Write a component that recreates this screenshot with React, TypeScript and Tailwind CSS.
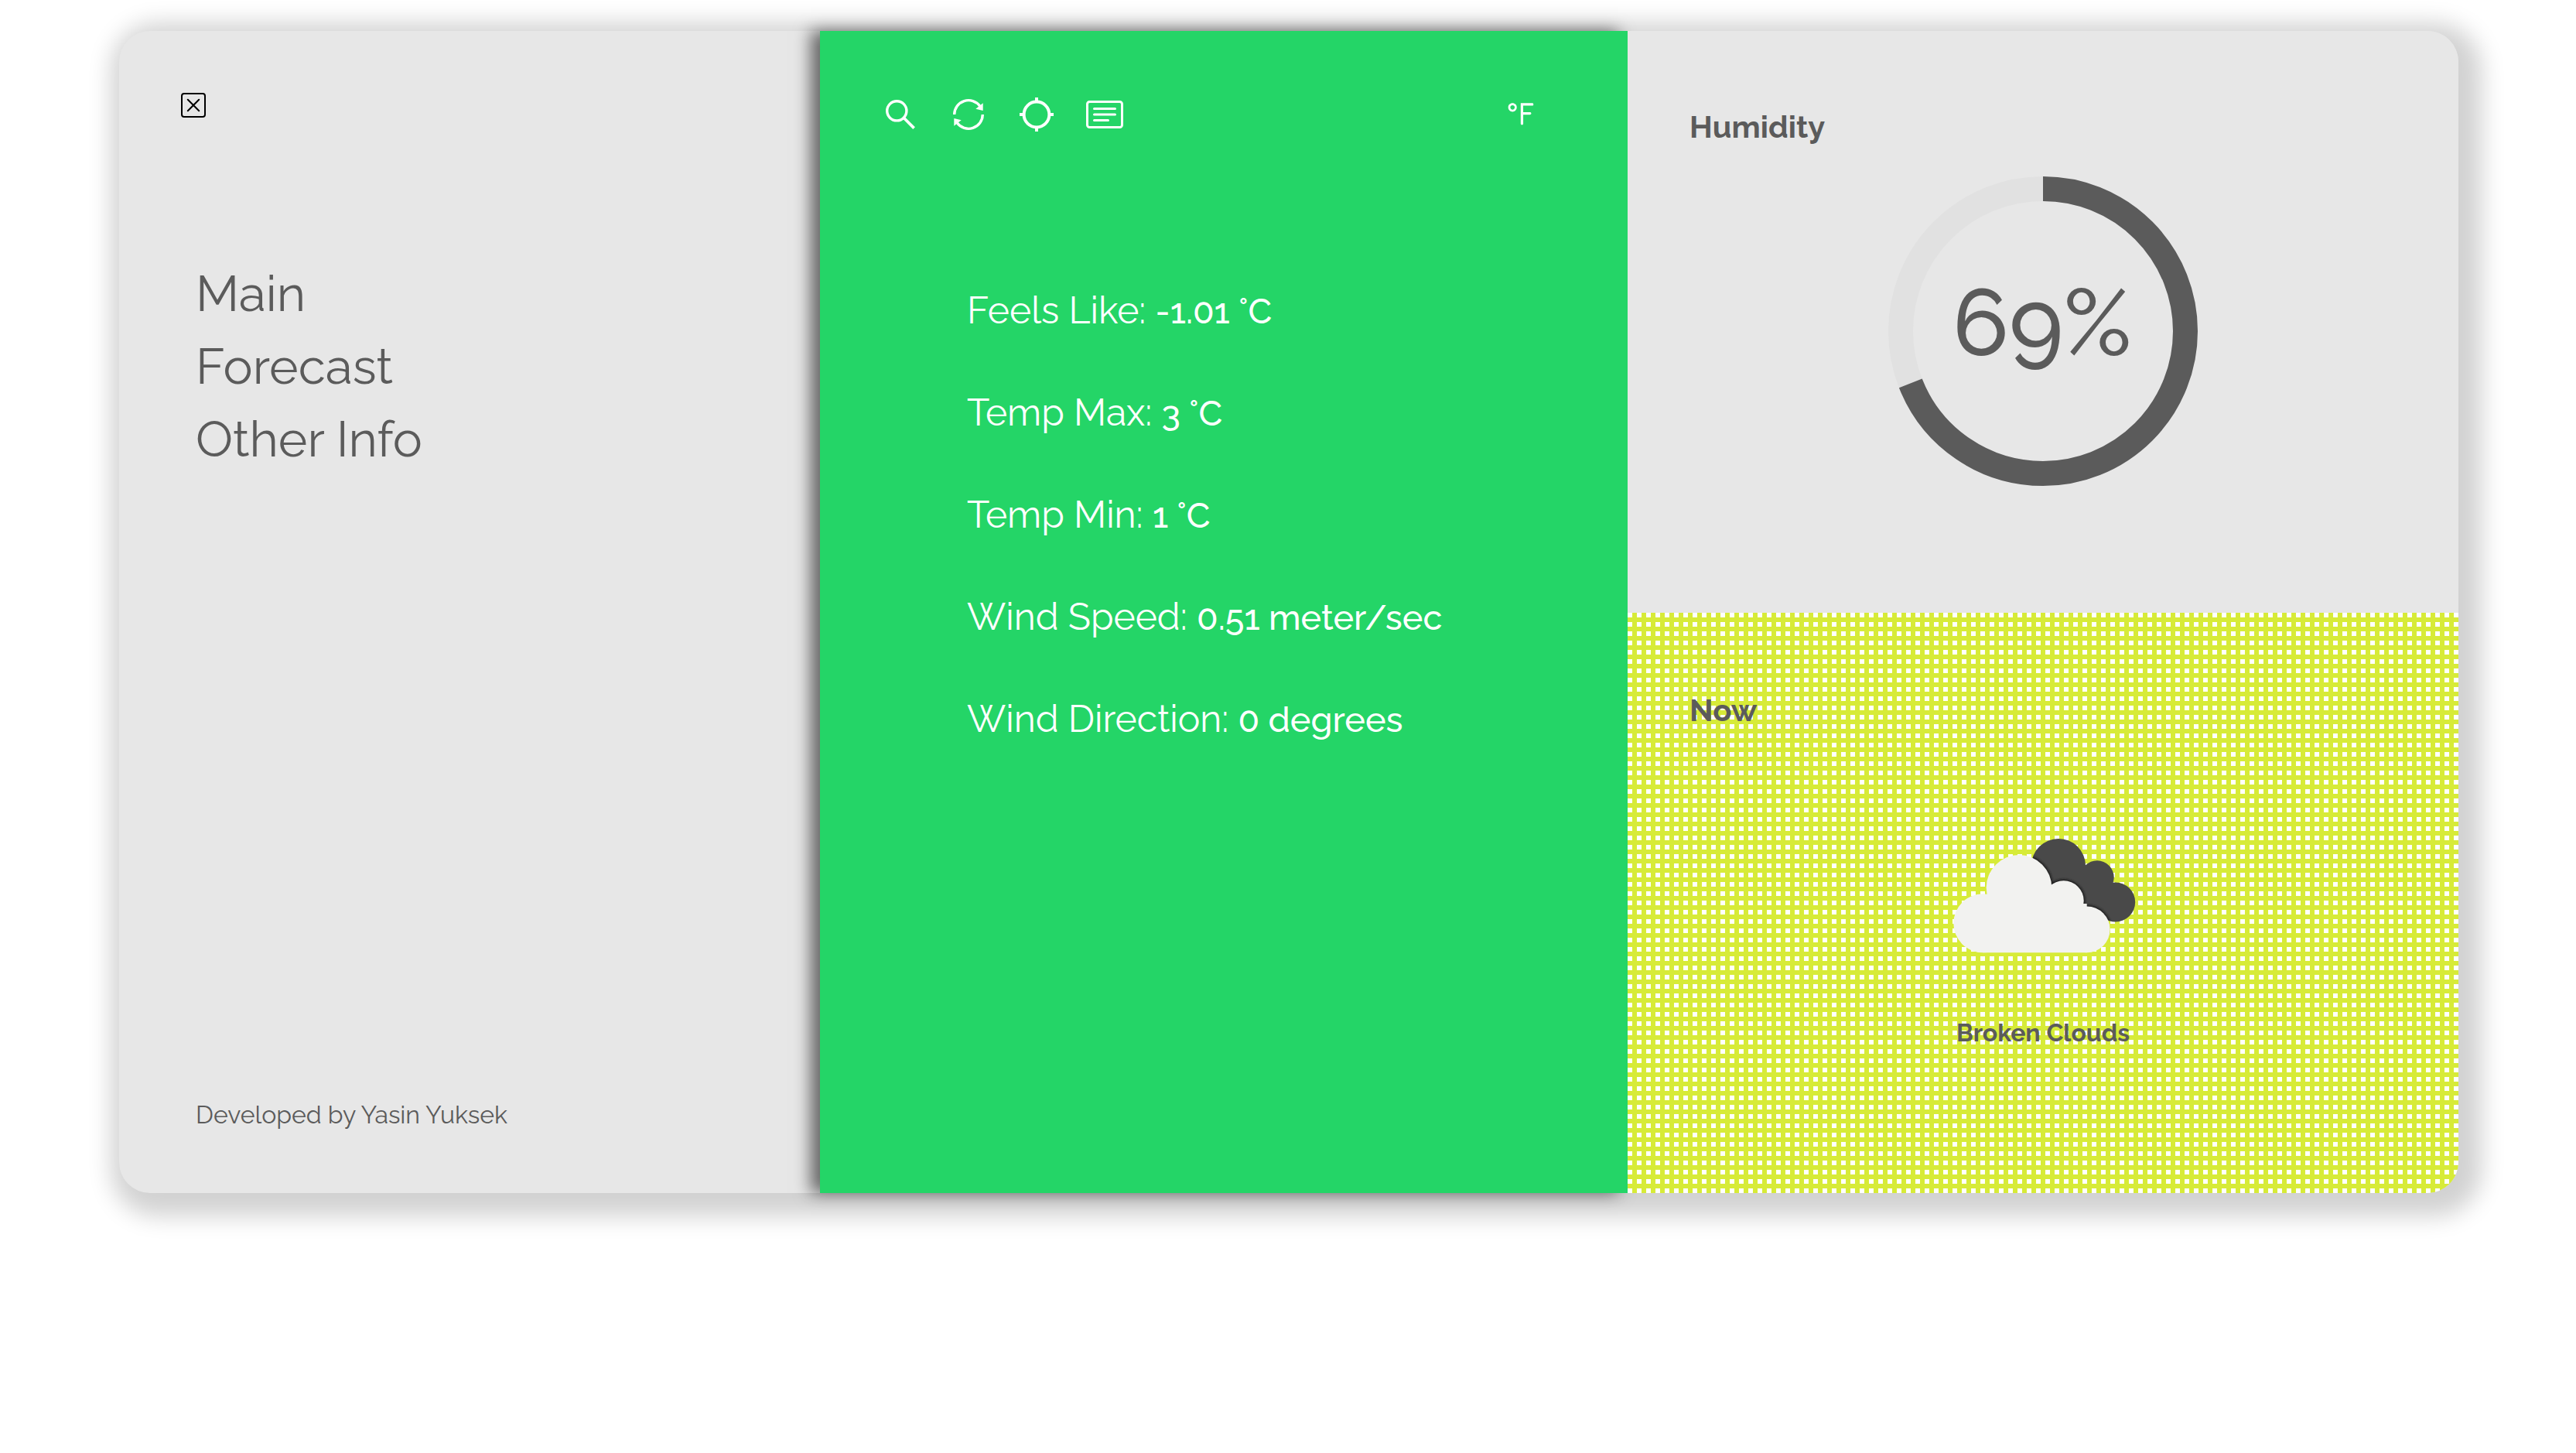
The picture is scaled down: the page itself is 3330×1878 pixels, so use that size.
import type { ReactNode } from "react";
import { BsCardText } from "react-icons/bs";
import { WiFahrenheit } from "react-icons/wi";

const menu = ["Main", "Forecast", "Other Info"];

const details = [
  { label: "Feels Like:", value: "-1.01 °C" },
  { label: "Temp Max:", value: "3 °C" },
  { label: "Temp Min:", value: "1 °C" },
  { label: "Wind Speed:", value: "0.51 meter/sec" },
  { label: "Wind Direction:", value: "0 degrees" },
];

function CloseIcon() {
  return (
    <svg viewBox="0 0 32 32" className="size-8" fill="none" stroke="currentColor" strokeWidth="2" aria-hidden="true">
      <rect x="1" y="1" width="30" height="30" rx="3" />
      <path d="M8.8 8.8 23.2 23.2M23.2 8.8 8.8 23.2" strokeLinecap="round" />
    </svg>
  );
}

function SearchIcon() {
  return (
    <svg viewBox="0 0 48 48" className="size-12" fill="none" stroke="currentColor" aria-hidden="true">
      <circle cx="19.3" cy="19.3" r="12.6" strokeWidth="3.4" />
      <path d="M28.5 28.5 41.6 41.6" strokeWidth="3.8" />
    </svg>
  );
}

function RefreshIcon() {
  return (
    <svg viewBox="0 0 48 48" className="size-12" fill="none" stroke="currentColor" aria-hidden="true">
      <path d="M5.7 24A18.3 18.3 0 0 1 38.8 13.2" strokeWidth="3.4" />
      <path d="M42.3 24A18.3 18.3 0 0 1 9.2 34.8" strokeWidth="3.4" />
      <path d="M33.3 16.7 38 13 42.7 9.3V19Z" fill="currentColor" stroke="none" />
      <path d="M14.7 31.3 10 35 5.3 38.7V29Z" fill="currentColor" stroke="none" />
    </svg>
  );
}

function LocateIcon() {
  return (
    <svg viewBox="0 0 48 48" className="size-12" fill="none" stroke="currentColor" strokeWidth="4" aria-hidden="true">
      <circle cx="24" cy="24" r="16.4" />
      <path d="M24 2v5M24 41v5M2 24h5M41 24h5" />
    </svg>
  );
}

function IconButton({ label, children }: { label: string; children: ReactNode }) {
  return (
    <button type="button" aria-label={label} className="block cursor-pointer">
      {children}
    </button>
  );
}

function HumidityRing({ percent }: { percent: number }) {
  const r = 184;
  const length = 2 * Math.PI * r;
  return (
    <svg viewBox="0 0 400 400" className="mx-auto mt-10 block size-[400px]" role="img" aria-label="Humidity level">
      <circle cx="200" cy="200" r={r} fill="none" stroke="#e1e1e1" strokeWidth="32" />
      <circle
        cx="200"
        cy="200"
        r={r}
        fill="none"
        stroke="#5b5b5b"
        strokeWidth="32"
        strokeDasharray={`${(length * percent) / 100} ${length}`}
        transform="rotate(-90 200 200)"
      />
      <text x="199" y="231" textAnchor="middle" fill="#5b5b5b" className="text-[120px] font-medium">
        {percent}%
      </text>
    </svg>
  );
}

function BrokenClouds() {
  return (
    <svg viewBox="0 0 240 160" className="mx-auto mt-[136px] block h-40 w-60" aria-hidden="true">
      <defs>
        <clipPath id="rear-cloud">
          <circle cx="140" cy="41" r="35" />
          <circle cx="190" cy="56" r="21.7" />
          <circle cx="213.7" cy="88" r="25.5" />
          <path d="M140 41 190 50 213 88 200 109 150 100Z" />
        </clipPath>
        <filter id="soft-edge">
          <feGaussianBlur stdDeviation="1.5" />
        </filter>
      </defs>
      <g clipPath="url(#rear-cloud)">
        <rect width="240" height="160" fill="#494949" />
        <g fill="#1c1c1c" filter="url(#soft-edge)">
          <circle cx="89" cy="69.3" r="44" />
          <circle cx="146.7" cy="86.3" r="27.8" />
          <circle cx="176.7" cy="123.3" r="31.6" />
        </g>
      </g>
      <g fill="#f2f2f0">
        <circle cx="42.3" cy="115.3" r="38" />
        <circle cx="89" cy="69.3" r="42.3" />
        <circle cx="146.7" cy="86.3" r="26" />
        <circle cx="176.7" cy="123.3" r="29.9" />
        <path d="M42.3 90H176.7V153.2H42.3Z" />
      </g>
    </svg>
  );
}

export default function App() {
  return (
    <div className="min-h-screen bg-white pt-10 pr-[152px] pl-[154px] font-[Raleway,Lato,sans-serif] text-[#5b5b5b]">
      <main className="grid min-h-[80vh] grid-cols-[906fr_1044fr_1074fr] rounded-[40px] bg-[#e7e7e7] shadow-[10px_10px_30px_20px_rgba(0,0,0,0.18)]">
        <aside className="flex flex-col px-20 pt-20 pb-[82px]">
          <button type="button" aria-label="Close menu" className="block w-8 cursor-pointer text-black">
            <CloseIcon />
          </button>
          <nav className="mt-[181px] flex flex-col items-start pl-[19px]">
            {menu.map((item) => (
              <a key={item} href="#" className="text-[64px] leading-[94px]">
                {item}
              </a>
            ))}
          </nav>
          <p className="mt-auto pl-[19px] text-[32px] leading-[38px]">Developed by Yasin Yuksek</p>
        </aside>

        <section className="bg-[#24d567] text-white shadow-[-12px_0_20px_rgba(0,0,0,0.56)]">
          <div className="mt-[62px] flex h-[92px] items-center gap-10 pr-[92px] pl-20">
            <IconButton label="Search">
              <SearchIcon />
            </IconButton>
            <IconButton label="Refresh">
              <RefreshIcon />
            </IconButton>
            <IconButton label="Use my location">
              <LocateIcon />
            </IconButton>
            <IconButton label="Details">
              <BsCardText className="size-12" />
            </IconButton>
            <div className="ml-auto pt-1.5">
              <IconButton label="Switch to Fahrenheit">
                <WiFahrenheit className="size-[92px]" />
              </IconButton>
            </div>
          </div>
          <ul className="mt-[179px] flex flex-col gap-[76px] pl-[190px]">
            {details.map(({ label, value }) => (
              <li key={label} className="text-[48px] leading-[56px]">
                {label} <span className="text-[45px] leading-10 font-medium">{value}</span>
              </li>
            ))}
          </ul>
        </section>

        <div className="relative grid grid-rows-[752fr_750fr]">
          <section className="rounded-tr-[40px] bg-[#e7e7e7] pt-[100px]">
            <h2 className="pl-20 text-[40px] leading-[48px] font-bold">Humidity</h2>
            <HumidityRing percent={69} />
          </section>
          <section className="rounded-br-[40px] bg-white bg-[linear-gradient(90deg,transparent_6px,#d7eb38_6px),linear-gradient(transparent_6px,#d7eb38_6px)] bg-[length:12px_12px] pt-[102px]">
            <h2 className="pl-20 text-[40px] leading-[48px] font-bold">Now</h2>
            <BrokenClouds />
            <p className="mt-[77px] text-center text-[32px] leading-10 font-bold">Broken Clouds</p>
          </section>
        </div>
      </main>
    </div>
  );
}
